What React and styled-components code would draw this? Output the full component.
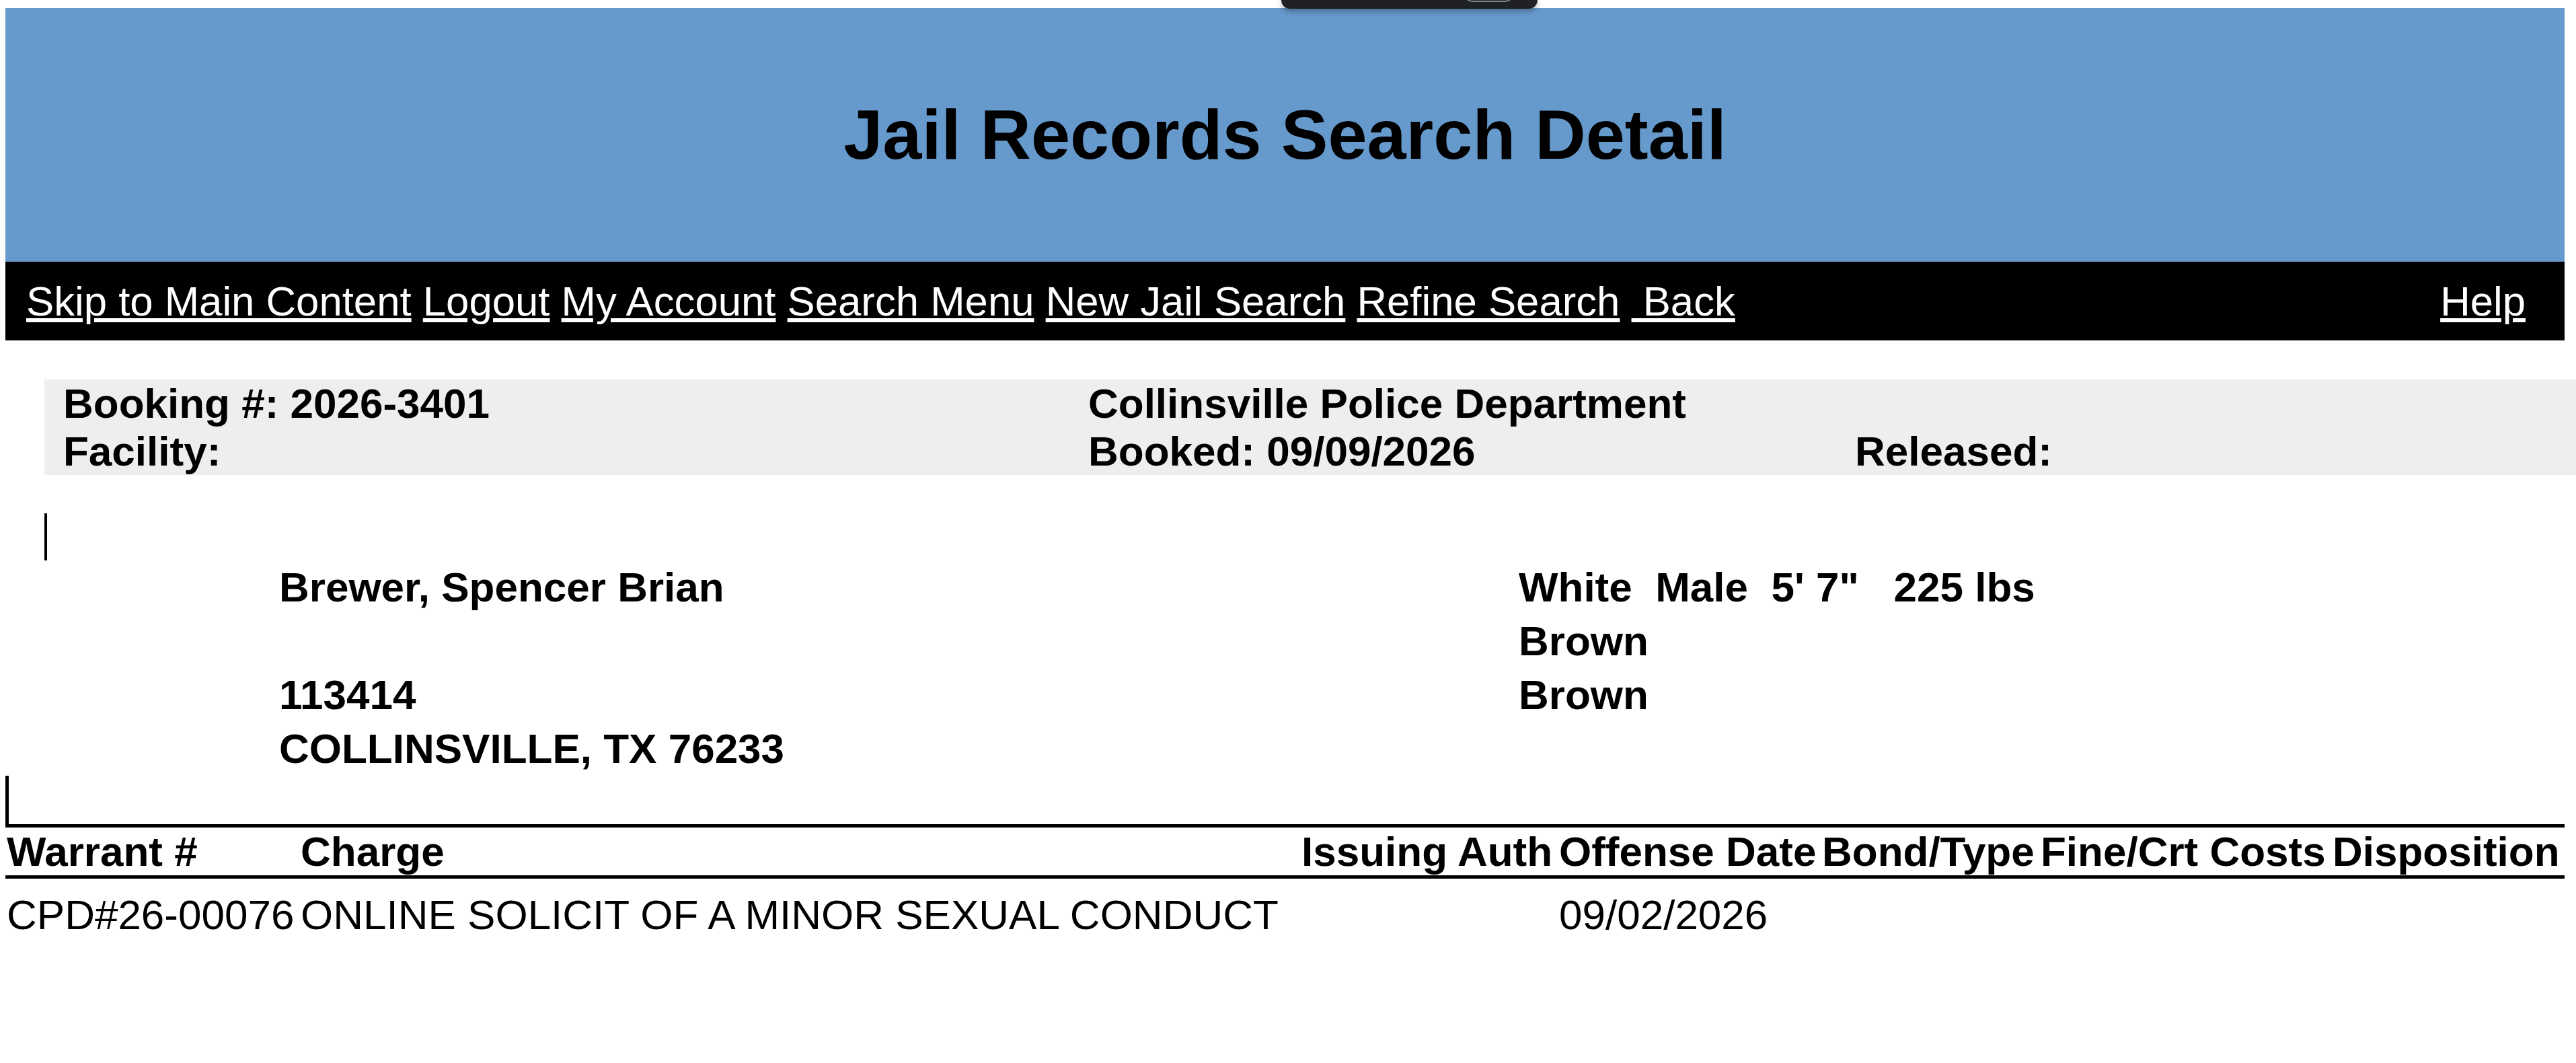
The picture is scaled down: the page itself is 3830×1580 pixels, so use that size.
import React from 'react';
import styled, { createGlobalStyle } from 'styled-components';

const GlobalStyle = createGlobalStyle`
  body {
    margin: 0;
    padding: 12px 17px 8px 8px;
    background: #ffffff;
    color: #000000;
    font-family: 'Liberation Sans', Arial, sans-serif;
    font-size: 62px;
  }
`;

// browser "sharing" tab that sits over the top edge
const ShareTab = styled.div`
  position: fixed;
  top: 0;
  left: 1905px;
  width: 381px;
  height: 13px;
  background: #202124;
  border-radius: 0 0 14px 14px;
  box-shadow: 0 3px 8px rgba(0, 0, 0, 0.35);
  overflow: hidden;
`;

const SharePill = styled.span`
  position: absolute;
  left: 272px;
  top: -22px;
  width: 73px;
  height: 25px;
  border: 2px solid #80868b;
  border-radius: 12px;
  box-sizing: border-box;
`;

const Banner = styled.header`
  height: 377px;
  background: #6699cc;
  display: flex;
  align-items: center;
  justify-content: center;
`;

const Title = styled.h1`
  margin: 0;
  font-size: 104.5px;
  font-weight: bold;
  line-height: 1.15;
`;

const NavBar = styled.nav`
  background: #000000;
  display: flex;
  justify-content: space-between;
  align-items: center;
  padding: 23px 58px 23px 31px;
  font-size: 61.7px;
  line-height: 71px;
  white-space: nowrap;
`;

const NavLink = styled.a`
  color: #ffffff;
  text-decoration: underline;
  cursor: pointer;
`;

const InfoBox = styled.div`
  margin: 58px -17px 0 58px;
  padding-left: 28px;
  background: #eeeeee;
  display: grid;
  grid-template-columns: 1524px 1140px 1fr;
  font-weight: bold;
  line-height: 71px;
  white-space: nowrap;
`;

const PhotoSlot = styled.div`
  margin: 57px 0 0 58px;
  height: 70px;
  border-left: 4px solid #000000;
`;

const Person = styled.div`
  display: grid;
  grid-template-columns: 1843px 1fr;
  grid-auto-rows: 80px;
  padding-left: 407px;
  font-weight: bold;
  line-height: 80px;
  white-space: nowrap;
`;

const Divider = styled.div`
  height: 72px;
  border-left: 5px solid #000000;
`;

const ChargeRow = styled.div`
  display: grid;
  grid-template-columns: 437px 1488px 383px 391px 325px 434px 1fr;
  padding: ${(p) => (p.$head ? '0 2px' : '18px 2px 0')};
  font-weight: ${(p) => (p.$head ? 'bold' : 'normal')};
  border-top: ${(p) => (p.$head ? '5px solid #000000' : 'none')};
  border-bottom: ${(p) => (p.$head ? '5px solid #000000' : 'none')};
  line-height: 71px;
  white-space: nowrap;
`;

const links = [
  'Skip to Main Content',
  'Logout',
  'My Account',
  'Search Menu',
  'New Jail Search',
  'Refine Search',
  '\u00a0Back',
];

const heads = [
  'Warrant #',
  'Charge',
  'Issuing Auth',
  'Offense Date',
  'Bond/Type',
  'Fine/Crt Costs',
  'Disposition',
];

const charges = [
  ['CPD#26-00076', 'ONLINE SOLICIT OF A MINOR SEXUAL CONDUCT', '', '09/02/2026', '', '', ''],
];

const App = () => {
  return (
    <>
      <GlobalStyle />
      <ShareTab>
        <SharePill />
      </ShareTab>
      <Banner>
        <Title>Jail Records Search Detail</Title>
      </Banner>
      <NavBar>
        <span>
          {links.map((text, i) => (
            <React.Fragment key={text}>
              {i > 0 && ' '}
              <NavLink href="#">{text}</NavLink>
            </React.Fragment>
          ))}
        </span>
        <NavLink href="#">Help</NavLink>
      </NavBar>

      <InfoBox>
        <div>Booking #: 2026-3401</div>
        <div>Collinsville Police Department</div>
        <div></div>
        <div>Facility:</div>
        <div>Booked: 09/09/2026</div>
        <div>Released:</div>
      </InfoBox>

      <PhotoSlot />

      <Person>
        <div>Brewer, Spencer Brian</div>
        <div>White{'\u00a0 '}Male{'\u00a0 '}5' 7"{'\u00a0\u00a0 '}225 lbs</div>
        <div></div>
        <div>Brown</div>
        <div>113414</div>
        <div>Brown</div>
        <div>COLLINSVILLE, TX 76233</div>
        <div></div>
      </Person>

      <Divider />

      <ChargeRow $head>
        {heads.map((h) => (
          <div key={h}>{h}</div>
        ))}
      </ChargeRow>
      {charges.map((row, r) => (
        <ChargeRow key={r}>
          {row.map((cell, c) => (
            <div key={c}>{cell}</div>
          ))}
        </ChargeRow>
      ))}
    </>
  );
};

export default App;
